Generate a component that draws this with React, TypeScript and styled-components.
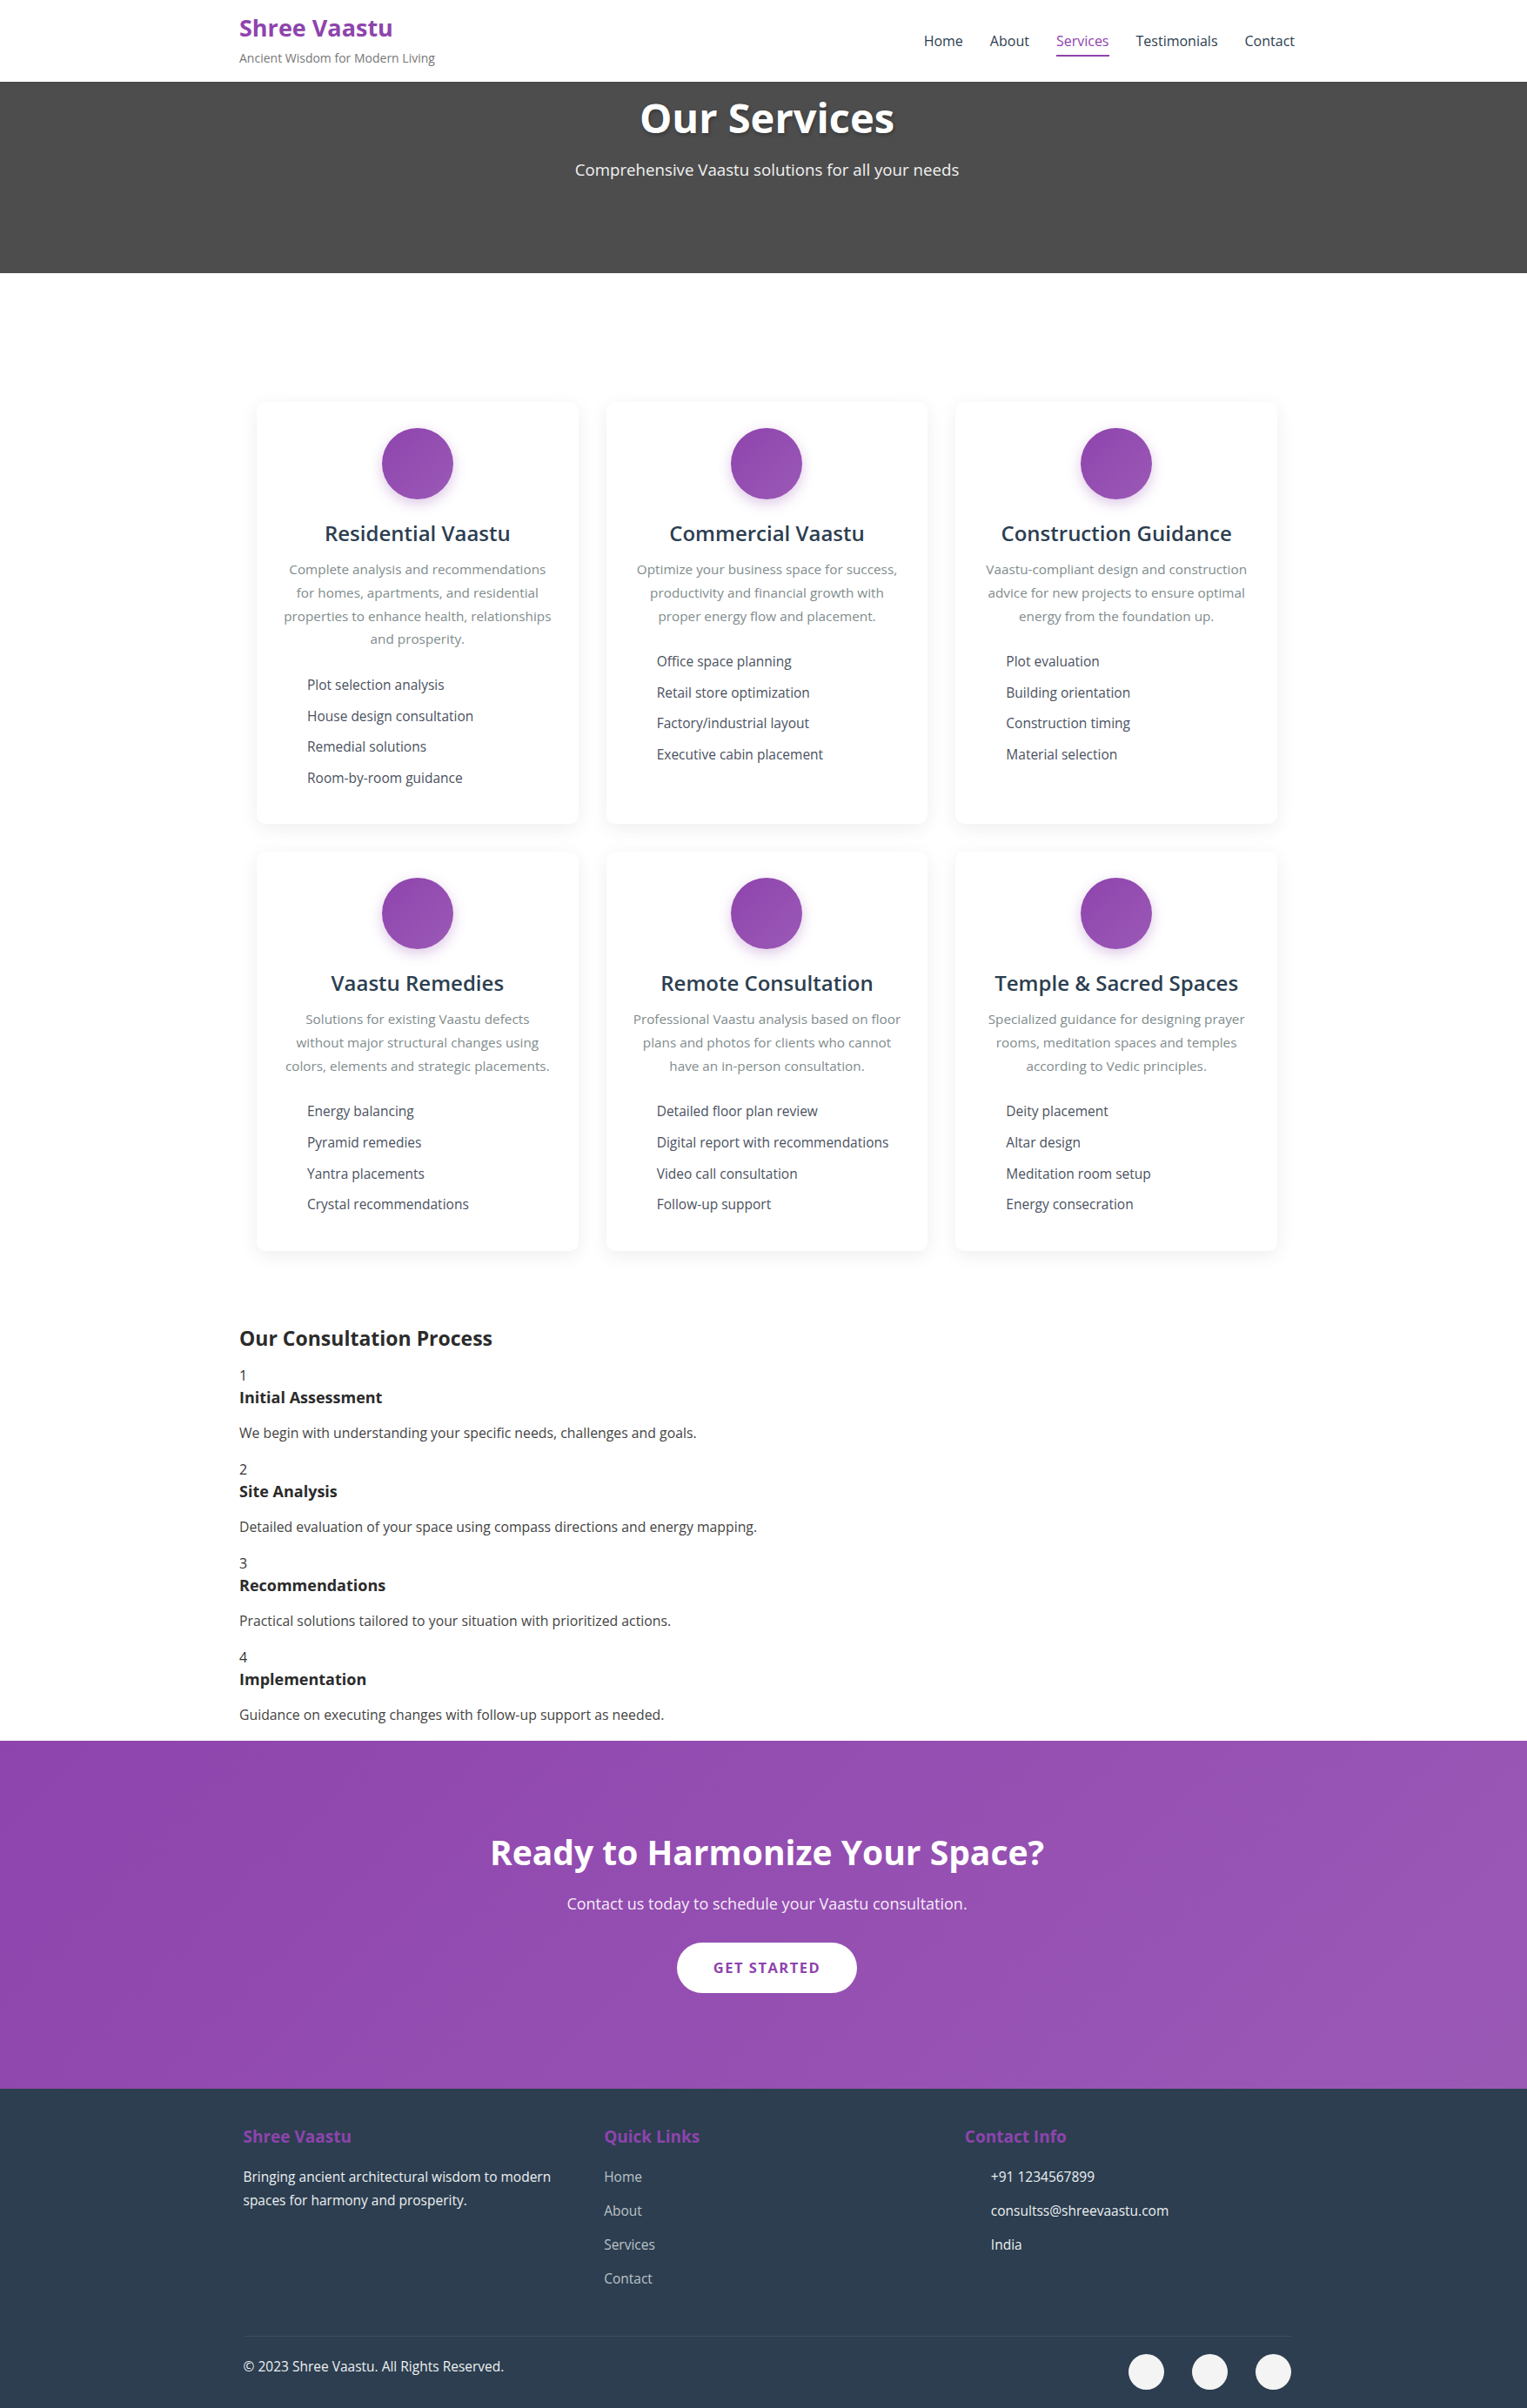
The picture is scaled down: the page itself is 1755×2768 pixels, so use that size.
import React from "react";
import styled, { createGlobalStyle } from "styled-components";

const GlobalStyle = createGlobalStyle`
  * { box-sizing: border-box; }
  html, body { margin: 0; padding: 0; background: #ffffff; }
  body {
    font-family: "Open Sans", "Segoe UI", "Noto Sans", sans-serif;
    color: #333333;
    line-height: 1.6;
  }
  ul { list-style: none; margin: 0; padding: 0; }
  h1, h2, h3, h4, p { margin: 0; }
`;

const purple = "#8e44ad";
const slate = "#2c3e50";

/* Content is centred a few pixels right of the page centre in the reference:
   every centred block carries an 8px left padding to reproduce that. */
const shift = "8px";

/* ---------- Header ---------- */
const Header = styled.header`
  background: #ffffff;
  padding: 16px 0 15px;
  box-shadow: 0 2px 6px rgba(0, 0, 0, 0.06);
  position: relative;
  z-index: 2;
`;

const HeaderInner = styled.div`
  width: 1221px;
  padding-left: ${shift};
  margin: 0 auto;
  display: flex;
  align-items: center;
  justify-content: space-between;
`;

const Brand = styled.div`
  display: flex;
  flex-direction: column;
`;

const Logo = styled.h1`
  font-size: 27px;
  font-weight: 700;
  line-height: 1.2;
  color: ${purple};
  margin-bottom: 8px;
`;

const Tagline = styled.p`
  font-size: 14px;
  line-height: 1.6;
  color: #777777;
`;

const Nav = styled.nav`
  display: flex;
  gap: 31px;
`;

const NavLink = styled.a<{ $active?: boolean }>`
  position: relative;
  font-size: 16px;
  font-weight: 500;
  line-height: 25.6px;
  padding: 5px 0;
  color: ${(p) => (p.$active ? purple : slate)};
  text-decoration: none;
  &::after {
    content: "";
    position: absolute;
    left: 0;
    bottom: 0;
    height: 2px;
    width: 100%;
    background: ${purple};
    display: ${(p) => (p.$active ? "block" : "none")};
  }
`;

/* ---------- Hero ---------- */
const Hero = styled.section`
  background: #4d4d4d;
  padding: 13px 0 104px ${shift};
  text-align: center;
  color: #ffffff;
`;

const HeroTitle = styled.h1`
  font-size: 47px;
  font-weight: 700;
  line-height: 1.2;
  margin-bottom: 17px;
  text-shadow: 1px 2px 4px rgba(0, 0, 0, 0.3);
`;

const HeroSub = styled.p`
  font-size: 18.7px;
  line-height: 1.6;
  color: #f2f2f2;
`;

/* ---------- Services ---------- */
const ServicesSection = styled.section`
  padding: 148px 0 87px;
`;

const Grid = styled.div`
  width: 1181px;
  padding-left: ${shift};
  margin: 0 auto;
  display: grid;
  grid-template-columns: repeat(3, 1fr);
  gap: 32px;
`;

const Card = styled.div`
  background: #ffffff;
  border-radius: 10px;
  padding: 30px;
  box-shadow: 0 5px 22px rgba(0, 0, 0, 0.07);
  text-align: center;
`;

const IconCircle = styled.div`
  width: 82px;
  height: 82px;
  border-radius: 50%;
  margin: 0 auto 23px;
  background: linear-gradient(135deg, #8e44ad, #9b59b6);
  box-shadow: 0 5px 15px rgba(142, 68, 173, 0.3);
`;

const CardTitle = styled.h3`
  font-size: 24px;
  font-weight: 600;
  line-height: 31px;
  color: ${slate};
  margin-bottom: 13px;
`;

const CardDesc = styled.p`
  font-size: 15.3px;
  line-height: 26.7px;
  color: #7f8c8d;
  margin-bottom: 27px;
`;

const FeatureList = styled.ul`
  text-align: left;
  padding-left: 28px;
`;

const Feature = styled.li`
  font-size: 15.5px;
  line-height: 25.6px;
  color: #4a5160;
  margin-bottom: 10px;
`;

/* ---------- Process ---------- */
const ProcessSection = styled.section`
  width: 1221px;
  padding-left: ${shift};
  margin: 0 auto;
`;

const ProcessTitle = styled.h2`
  font-size: 23px;
  font-weight: 700;
  line-height: 1.2;
  color: #2b2b2b;
  margin-bottom: 16.7px;
`;

const Step = styled.div`
  display: flex;
  flex-direction: column;
`;

const StepNumber = styled.div`
  font-size: 16px;
  line-height: 25px;
  color: #333333;
`;

const StepTitle = styled.h4`
  font-size: 18px;
  font-weight: 700;
  line-height: 25px;
  color: #2b2b2b;
`;

const StepText = styled.p`
  font-size: 15.8px;
  line-height: 26px;
  color: #444444;
  margin: 14.5px 0 17.5px;
`;

/* ---------- CTA ---------- */
const Cta = styled.section`
  background: linear-gradient(135deg, #8e44ad, #9b59b6);
  padding: 104px 0 110px ${shift};
  text-align: center;
  color: #ffffff;
`;

const CtaTitle = styled.h2`
  font-size: 39px;
  font-weight: 700;
  line-height: 48px;
  margin-bottom: 20.6px;
`;

const CtaText = styled.p`
  font-size: 18px;
  line-height: 28.8px;
  color: #f4ecf7;
  margin-bottom: 30.6px;
`;

const CtaButton = styled.a`
  display: inline-block;
  background: #ffffff;
  color: ${purple};
  font-size: 16.5px;
  font-weight: 700;
  letter-spacing: 1.5px;
  line-height: 25.6px;
  padding: 16px 42px;
  border-radius: 30px;
  text-decoration: none;
`;

/* ---------- Footer ---------- */
const Footer = styled.footer`
  background: ${slate};
  color: #ecf0f1;
  padding: 43px 0 21px;
`;

const FooterInner = styled.div`
  width: 1212px;
  padding-left: ${shift};
  margin: 0 auto;
`;

const FooterGrid = styled.div`
  display: grid;
  grid-template-columns: repeat(3, 1fr);
  gap: 40px;
  margin-bottom: 53px;
`;

const FooterHeading = styled.h3`
  font-size: 19px;
  font-weight: 700;
  line-height: 24px;
  color: ${purple};
  margin-bottom: 21px;
`;

const FooterText = styled.p`
  font-size: 15.5px;
  line-height: 27px;
  color: #ecf0f1;
`;

const FooterList = styled.ul<{ $indent?: boolean }>`
  display: flex;
  flex-direction: column;
  gap: 13px;
  padding-left: ${(p) => (p.$indent ? "30px" : "0")};
`;

const FooterItem = styled.li<{ $muted?: boolean }>`
  font-size: 15.5px;
  line-height: 26px;
  color: ${(p) => (p.$muted ? "#bdc3c7" : "#ecf0f1")};
`;

const FooterBottom = styled.div`
  border-top: 1px solid rgba(255, 255, 255, 0.08);
  padding-top: 20px;
  display: flex;
  align-items: center;
  justify-content: space-between;
`;

const Copyright = styled.p`
  font-size: 15.5px;
  line-height: 26px;
  color: #ecf0f1;
  margin-bottom: 12px;
`;

const Socials = styled.div`
  display: flex;
  gap: 32px;
`;

const SocialDot = styled.a`
  width: 41px;
  height: 41px;
  border-radius: 50%;
  background: #f4f4f4;
  display: block;
`;

const services = [
  {
    title: "Residential Vaastu",
    desc: "Complete analysis and recommendations for homes, apartments, and residential properties to enhance health, relationships and prosperity.",
    items: ["Plot selection analysis", "House design consultation", "Remedial solutions", "Room-by-room guidance"],
  },
  {
    title: "Commercial Vaastu",
    desc: "Optimize your business space for success, productivity and financial growth with proper energy flow and placement.",
    items: ["Office space planning", "Retail store optimization", "Factory/industrial layout", "Executive cabin placement"],
  },
  {
    title: "Construction Guidance",
    desc: "Vaastu-compliant design and construction advice for new projects to ensure optimal energy from the foundation up.",
    items: ["Plot evaluation", "Building orientation", "Construction timing", "Material selection"],
  },
  {
    title: "Vaastu Remedies",
    desc: "Solutions for existing Vaastu defects without major structural changes using colors, elements and strategic placements.",
    items: ["Energy balancing", "Pyramid remedies", "Yantra placements", "Crystal recommendations"],
  },
  {
    title: "Remote Consultation",
    desc: "Professional Vaastu analysis based on floor plans and photos for clients who cannot have an in-person consultation.",
    items: ["Detailed floor plan review", "Digital report with recommendations", "Video call consultation", "Follow-up support"],
  },
  {
    title: "Temple & Sacred Spaces",
    desc: "Specialized guidance for designing prayer rooms, meditation spaces and temples according to Vedic principles.",
    items: ["Deity placement", "Altar design", "Meditation room setup", "Energy consecration"],
  },
];

const steps = [
  { title: "Initial Assessment", text: "We begin with understanding your specific needs, challenges and goals." },
  { title: "Site Analysis", text: "Detailed evaluation of your space using compass directions and energy mapping." },
  { title: "Recommendations", text: "Practical solutions tailored to your situation with prioritized actions." },
  { title: "Implementation", text: "Guidance on executing changes with follow-up support as needed." },
];

export default function App() {
  return (
    <>
      <GlobalStyle />
      <Header>
        <HeaderInner>
          <Brand>
            <Logo>Shree Vaastu</Logo>
            <Tagline>Ancient Wisdom for Modern Living</Tagline>
          </Brand>
          <Nav>
            <NavLink href="#">Home</NavLink>
            <NavLink href="#">About</NavLink>
            <NavLink href="#" $active>Services</NavLink>
            <NavLink href="#">Testimonials</NavLink>
            <NavLink href="#">Contact</NavLink>
          </Nav>
        </HeaderInner>
      </Header>

      <Hero>
        <HeroTitle>Our Services</HeroTitle>
        <HeroSub>Comprehensive Vaastu solutions for all your needs</HeroSub>
      </Hero>

      <ServicesSection>
        <Grid>
          {services.map((s) => (
            <Card key={s.title}>
              <IconCircle />
              <CardTitle>{s.title}</CardTitle>
              <CardDesc>{s.desc}</CardDesc>
              <FeatureList>
                {s.items.map((i) => (
                  <Feature key={i}>{i}</Feature>
                ))}
              </FeatureList>
            </Card>
          ))}
        </Grid>
      </ServicesSection>

      <ProcessSection>
        <ProcessTitle>Our Consultation Process</ProcessTitle>
        {steps.map((s, idx) => (
          <Step key={s.title}>
            <StepNumber>{idx + 1}</StepNumber>
            <StepTitle>{s.title}</StepTitle>
            <StepText>{s.text}</StepText>
          </Step>
        ))}
      </ProcessSection>

      <Cta>
        <CtaTitle>Ready to Harmonize Your Space?</CtaTitle>
        <CtaText>Contact us today to schedule your Vaastu consultation.</CtaText>
        <CtaButton href="#">GET STARTED</CtaButton>
      </Cta>

      <Footer>
        <FooterInner>
          <FooterGrid>
            <div>
              <FooterHeading>Shree Vaastu</FooterHeading>
              <FooterText>
                Bringing ancient architectural wisdom to modern spaces for harmony and prosperity.
              </FooterText>
            </div>
            <div>
              <FooterHeading>Quick Links</FooterHeading>
              <FooterList>
                <FooterItem $muted>Home</FooterItem>
                <FooterItem $muted>About</FooterItem>
                <FooterItem $muted>Services</FooterItem>
                <FooterItem $muted>Contact</FooterItem>
              </FooterList>
            </div>
            <div>
              <FooterHeading>Contact Info</FooterHeading>
              <FooterList $indent>
                <FooterItem>+91 1234567899</FooterItem>
                <FooterItem>consultss@shreevaastu.com</FooterItem>
                <FooterItem>India</FooterItem>
              </FooterList>
            </div>
          </FooterGrid>
          <FooterBottom>
            <Copyright>© 2023 Shree Vaastu. All Rights Reserved.</Copyright>
            <Socials>
              <SocialDot href="#" aria-label="Facebook" />
              <SocialDot href="#" aria-label="Instagram" />
              <SocialDot href="#" aria-label="YouTube" />
            </Socials>
          </FooterBottom>
        </FooterInner>
      </Footer>
    </>
  );
}
